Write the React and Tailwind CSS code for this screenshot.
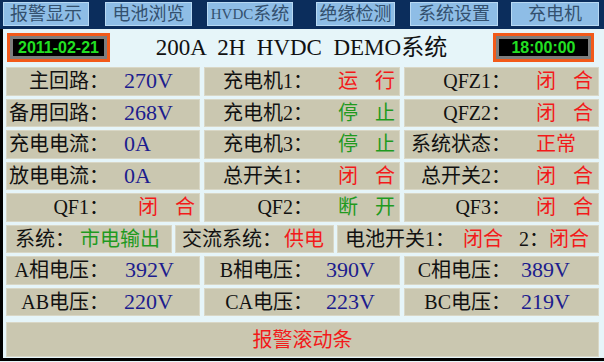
const serif = "font-['Liberation_Serif','Noto_Sans_CJK_SC',serif]";

const buttons = [
  { label: '报警显示', cls: 'ml-[3px] w-[86px]' },
  { label: '电池浏览', cls: 'ml-[16px] w-[87px]' },
  { label: 'HVDC系统', cls: 'ml-[15px] w-[86px]', latin: 'HVDC', rest: '系统' },
  { label: '绝缘检测', cls: 'ml-[23px] w-[79px]' },
  { label: '系统设置', cls: 'ml-[15px] w-[88px]' },
  { label: '充电机', cls: 'ml-[13px] w-[88px]' },
];

const RED = 'text-[#f21a1a]';
const GREEN = 'text-[#1f9a1f]';
const NAVY = 'text-[#1c1c8e]';

function Spaced({ text }) {
  return (
    <span className="flex gap-[17px]">
      {text.split('').map((c, i) => (
        <span key={i}>{c}</span>
      ))}
    </span>
  );
}

function Cell({ label, value, color, lw, vm, num, spaced }) {
  return (
    <div className="flex items-center bg-[#cac7b0] border border-[#d9d7c6] h-[28.5px] text-[20px] text-[#111] leading-none">
      <span className={`${lw} shrink-0 text-right whitespace-nowrap`}>{label}</span>
      <span className={`${vm} ${color} ${num ? 'text-[22px]' : ''} whitespace-nowrap`}>
        {spaced ? <Spaced text={value} /> : value}
      </span>
    </div>
  );
}

function ClockBox({ text, cls }) {
  return (
    <div className={`${cls} h-[29px] border-[3px] border-[#f25a1a] bg-[#7d7d7d] p-[3px]`}>
      <div className="h-full bg-black flex items-center justify-center font-['Liberation_Sans',sans-serif] font-bold text-[16px] text-[#22e022]">
        {text}
      </div>
    </div>
  );
}

export default function App() {
  const c1 = 'w-[102px]';
  const c2 = 'w-[108px]';
  const c3 = 'w-[106px]';

  return (
    <div className={`w-[604px] h-[362px] overflow-hidden bg-[#e6f5f9] ${serif}`}>
      <div className="h-[29px] bg-[#0b2d5c] flex items-start pt-[2px]">
        {buttons.map((b) => (
          <div
            key={b.label}
            className={`${b.cls} h-[24px] bg-[#8ebde6] border border-[#b8d9f3] flex items-center justify-center text-[18px] text-[#33506e] whitespace-nowrap`}
          >
            {b.latin ? (
              <>
                <span className="text-[15px]">{b.latin}</span>
                {b.rest}
              </>
            ) : (
              b.label
            )}
          </div>
        ))}
      </div>

      <div className="border-l-[3px] border-b-[3px] border-black pl-[3px] pr-[5px] h-[332px]">
        <div className="h-[38px] flex items-start pt-[4px]">
          <ClockBox text="2011-02-21" cls="ml-[1px] w-[103px]" />
          <div className="flex-1 text-center text-[23px] leading-[29px] whitespace-pre text-[#111]">
            {'200A  2H  HVDC  DEMO系统'}
          </div>
          <ClockBox text="18:00:00" cls="mr-[5px] w-[101px]" />
        </div>

        <div className="grid grid-cols-[194px_196px_195px] gap-x-[4px] gap-y-[3px]">
          <Cell label="主回路：" value="270V" color={NAVY} num lw={c1} vm="ml-[15px]" />
          <Cell label="充电机1：" value="运行" color={RED} spaced lw={c2} vm="ml-[25px]" />
          <Cell label="QFZ1：" value="闭合" color={RED} spaced lw={c3} vm="ml-[25px]" />

          <Cell label="备用回路：" value="268V" color={NAVY} num lw={c1} vm="ml-[15px]" />
          <Cell label="充电机2：" value="停止" color={GREEN} spaced lw={c2} vm="ml-[25px]" />
          <Cell label="QFZ2：" value="闭合" color={RED} spaced lw={c3} vm="ml-[25px]" />

          <Cell label="充电电流：" value="0A" color={NAVY} num lw={c1} vm="ml-[15px]" />
          <Cell label="充电机3：" value="停止" color={GREEN} spaced lw={c2} vm="ml-[25px]" />
          <Cell label="系统状态：" value="正常" color={RED} lw={c3} vm="ml-[25px]" />

          <Cell label="放电电流：" value="0A" color={NAVY} num lw={c1} vm="ml-[15px]" />
          <Cell label="总开关1：" value="闭合" color={RED} spaced lw={c2} vm="ml-[25px]" />
          <Cell label="总开关2：" value="闭合" color={RED} spaced lw={c3} vm="ml-[25px]" />

          <Cell label="QF1：" value="闭合" color={RED} spaced lw={c1} vm="ml-[29px]" />
          <Cell label="QF2：" value="断开" color={GREEN} spaced lw={c2} vm="ml-[25px]" />
          <Cell label="QF3：" value="闭合" color={RED} spaced lw={c3} vm="ml-[25px]" />

          <div className="col-span-3 grid grid-cols-[166px_159px_262px] gap-x-[3px] text-[20px] text-[#111] leading-none">
            <div className="flex items-center bg-[#cac7b0] border border-[#d9d7c6] h-[28.5px] pl-[8px] whitespace-nowrap">
              系统：<span className={`ml-[5px] ${GREEN}`}>市电输出</span>
            </div>
            <div className="flex items-center bg-[#cac7b0] border border-[#d9d7c6] h-[28.5px] pl-[6px] whitespace-nowrap">
              交流系统：<span className={`ml-[2px] ${RED}`}>供电</span>
            </div>
            <div className="flex items-center bg-[#cac7b0] border border-[#d9d7c6] h-[28.5px] pl-[7px] whitespace-nowrap">
              电池开关1：<span className={`ml-[8px] ${RED}`}>闭合</span>
              <span className="ml-[16px]">2：</span>
              <span className={RED}>闭合</span>
            </div>
          </div>

          <Cell label="A相电压：" value="392V" color={NAVY} num lw={c1} vm="ml-[16px]" />
          <Cell label="B相电压：" value="390V" color={NAVY} num lw={c2} vm="ml-[13px]" />
          <Cell label="C相电压：" value="389V" color={NAVY} num lw={c3} vm="ml-[10px]" />

          <Cell label="AB电压：" value="220V" color={NAVY} num lw={c1} vm="ml-[15px]" />
          <Cell label="CA电压：" value="223V" color={NAVY} num lw={c2} vm="ml-[13px]" />
          <Cell label="BC电压：" value="219V" color={NAVY} num lw={c3} vm="ml-[10px]" />
        </div>

        <div className="mt-[6px] h-[35px] bg-[#cac7b0] border border-[#d9d7c6] flex items-center justify-center text-[20px] text-[#f21a1a]">
          报警滚动条
        </div>
      </div>
    </div>
  );
}
